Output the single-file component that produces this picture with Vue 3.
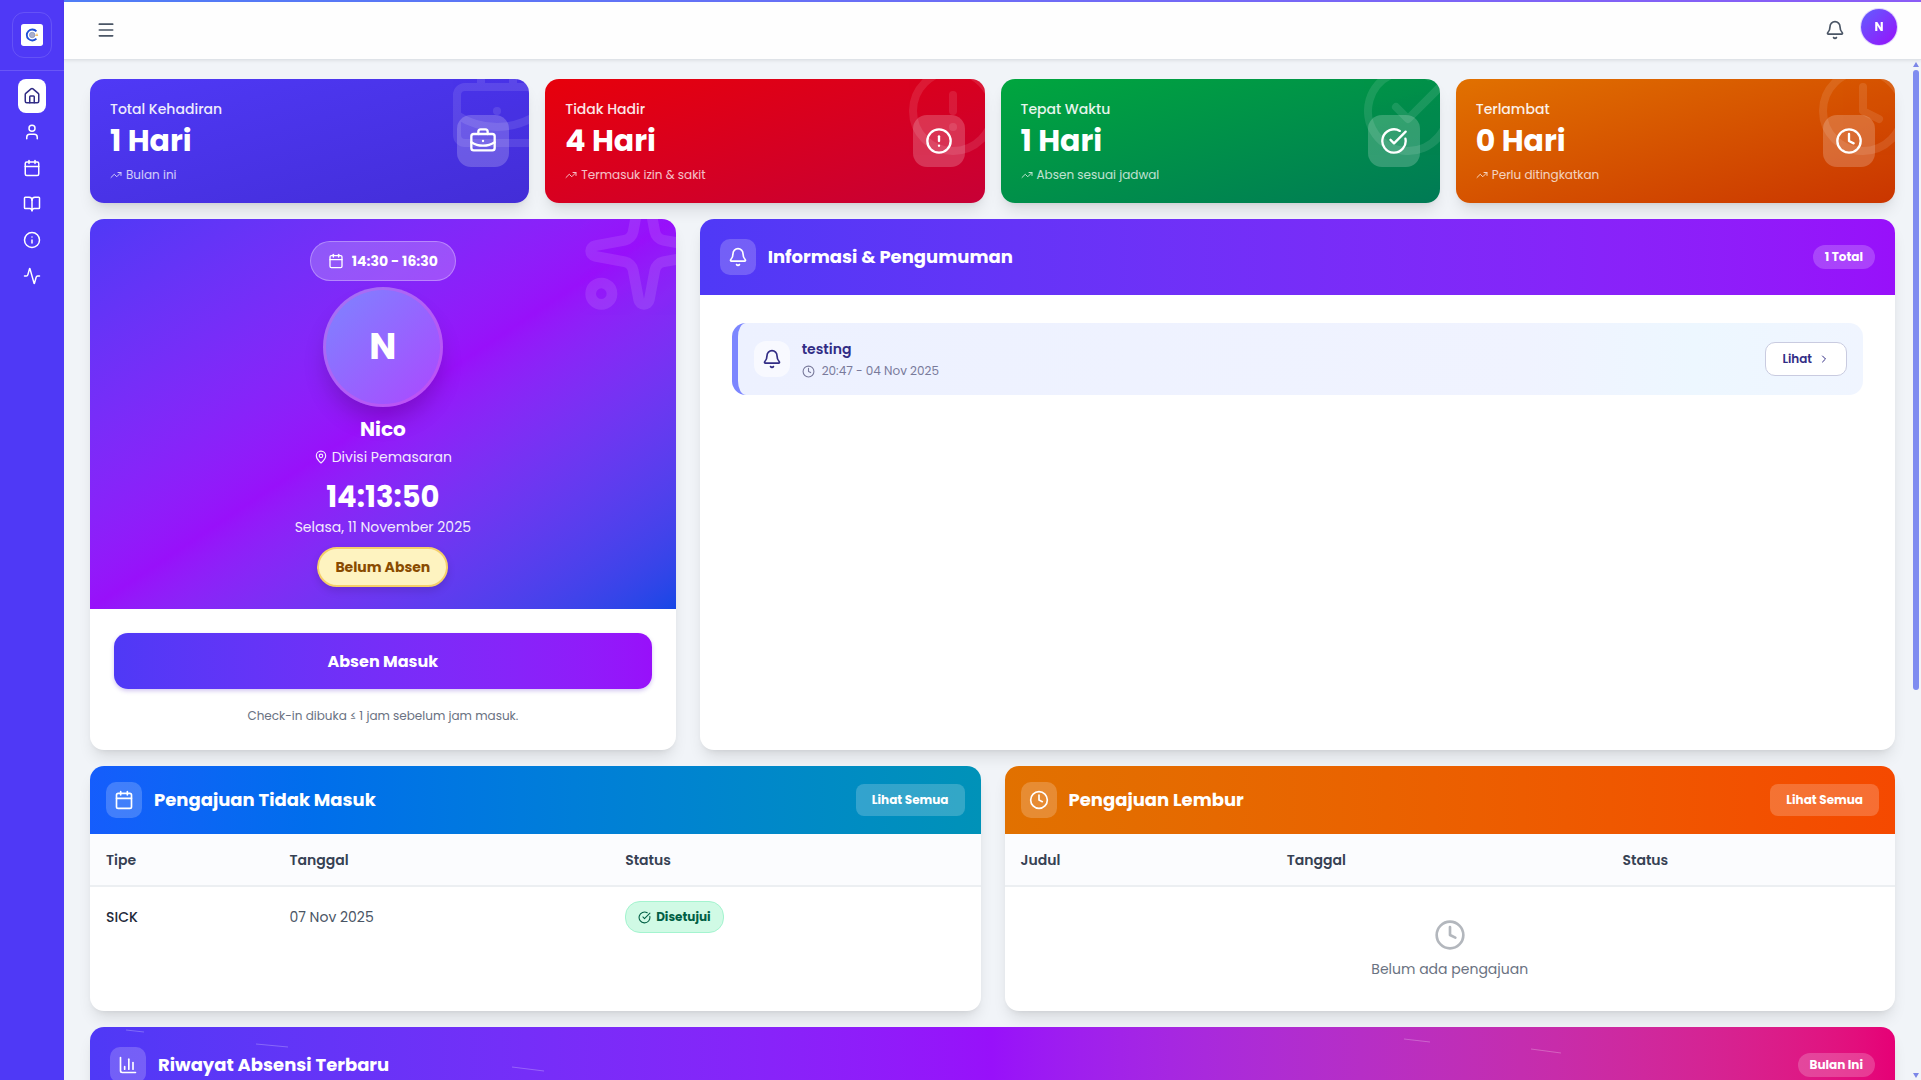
<template>
  <div class="layout">
    <aside class="sidebar">
      <div class="brand">
        <a href="#" class="brand-box" aria-label="Beranda">
          <svg class="brand-logo" viewBox="0 0 24 24">
            <rect width="24" height="24" rx="3" fill="#fff" />
            <path d="M16.8 8A6 6 0 1 0 16.8 16" fill="none" stroke="#1d4fd7" stroke-width="2" />
            <circle cx="12.2" cy="12" r="3" fill="#a9aecb" stroke="#8590bd" stroke-width="0.8" />
            <path d="M15.6 12.4h3M17.4 10.4v1.8" stroke="#f2c268" stroke-width="1.2" />
          </svg>
        </a>
      </div>
      <nav class="nav">
        <a
          v-for="item in menu"
          :key="item.icon"
          href="#"
          class="nav-item"
          :class="{ active: item.active }"
          :aria-label="item.label"
        >
          <Icon :name="item.icon" :size="18" />
        </a>
      </nav>
    </aside>

    <div class="main">
      <header class="topbar">
        <button class="icon-btn" aria-label="Menu"><Icon name="menu" :size="20" /></button>
        <div class="topbar-right">
          <button class="icon-btn" aria-label="Notifikasi"><Icon name="bell" :size="20" /></button>
          <button class="avatar-btn">N</button>
        </div>
      </header>

      <div class="body">
        <main class="content">
          <section class="stats">
            <div v-for="stat in stats" :key="stat.label" class="stat" :class="stat.color">
              <Icon :name="stat.icon" :size="96" class="stat-mark" />
              <div>
                <div class="stat-label">{{ stat.label }}</div>
                <div class="stat-value">{{ stat.value }}</div>
                <div class="stat-note"><Icon name="trending" :size="12" />{{ stat.note }}</div>
              </div>
              <div class="stat-icon"><Icon :name="stat.icon" :size="28" /></div>
            </div>
          </section>

          <section class="overview">
            <div class="card profile">
              <div class="profile-top">
                <Icon name="sparkles" :size="128" class="profile-mark" />
                <div class="shift"><Icon name="calendar" :size="16" />14:30 - 16:30</div>
                <div class="avatar">N</div>
                <h2 class="name">Nico</h2>
                <div class="division"><Icon name="pin" :size="14" />Divisi Pemasaran</div>
                <div class="clock">14:13:50</div>
                <div class="date">Selasa, 11 November 2025</div>
                <div class="absen-status">Belum Absen</div>
              </div>
              <div class="profile-bottom">
                <button class="absen-btn">Absen Masuk</button>
                <p class="hint">Check-in dibuka ≤ 1 jam sebelum jam masuk.</p>
              </div>
            </div>

            <div class="card">
              <div class="card-head tall indigo-head">
                <span class="head-icon"><Icon name="bell" :size="20" /></span>
                <h3>Informasi &amp; Pengumuman</h3>
                <span class="count">1 Total</span>
              </div>
              <div class="news-list">
                <div class="news">
                  <span class="news-icon"><Icon name="bell" :size="20" /></span>
                  <div class="news-text">
                    <div class="news-title">testing</div>
                    <div class="news-time"><Icon name="clock" :size="13" />20:47 - 04 Nov 2025</div>
                  </div>
                  <button class="news-btn">Lihat<Icon name="chevron" :size="12" /></button>
                </div>
              </div>
            </div>
          </section>

          <section class="requests">
            <div class="card">
              <div class="card-head blue-head">
                <span class="head-icon"><Icon name="calendar" :size="20" /></span>
                <h3>Pengajuan Tidak Masuk</h3>
                <button class="see-all">Lihat Semua</button>
              </div>
              <table class="leave">
                <thead>
                  <tr>
                    <th>Tipe</th>
                    <th>Tanggal</th>
                    <th>Status</th>
                  </tr>
                </thead>
                <tbody>
                  <tr v-for="row in leaves" :key="row.date">
                    <td class="type">{{ row.type }}</td>
                    <td>{{ row.date }}</td>
                    <td>
                      <span class="approved"><Icon name="check" :size="13" />{{ row.status }}</span>
                    </td>
                  </tr>
                </tbody>
              </table>
            </div>

            <div class="card">
              <div class="card-head orange-head">
                <span class="head-icon"><Icon name="clock" :size="20" /></span>
                <h3>Pengajuan Lembur</h3>
                <button class="see-all">Lihat Semua</button>
              </div>
              <table class="overtime">
                <thead>
                  <tr>
                    <th>Judul</th>
                    <th>Tanggal</th>
                    <th>Status</th>
                  </tr>
                </thead>
                <tbody>
                  <tr>
                    <td colspan="3" class="empty">
                      <Icon name="clock" :size="32" />
                      <div>Belum ada pengajuan</div>
                    </td>
                  </tr>
                </tbody>
              </table>
            </div>
          </section>

          <section class="card history">
            <div class="card-head tall pink-head">
              <svg class="streaks" viewBox="0 0 1805 76" preserveAspectRatio="none">
                <path d="M36 3l18 2M166 17l32 3M422 40l32 4M1314 12l26 3M1441 22l30 4" />
              </svg>
              <span class="head-icon"><Icon name="chart" :size="20" /></span>
              <h3>Riwayat Absensi Terbaru</h3>
              <span class="count">Bulan Ini</span>
            </div>
            <div class="history-body"></div>
          </section>
        </main>

        <div class="scrollbar">
          <span class="arrow up"></span>
          <span class="thumb"></span>
          <span class="arrow down"></span>
        </div>
      </div>
    </div>
  </div>
</template>

<script setup>
import { h } from 'vue'

const icons = {
  menu: ['M4 5h16', 'M4 12h16', 'M4 19h16'],
  home: [
    'M15 21v-8a1 1 0 0 0-1-1h-4a1 1 0 0 0-1 1v8',
    'M3 10a2 2 0 0 1 .709-1.528l7-5.999a2 2 0 0 1 2.582 0l7 5.999A2 2 0 0 1 21 10v9a2 2 0 0 1-2 2H5a2 2 0 0 1-2-2z',
  ],
  user: ['M19 21v-2a4 4 0 0 0-4-4H9a4 4 0 0 0-4 4v2', 'M16 7a4 4 0 1 1-8 0a4 4 0 1 1 8 0'],
  calendar: [
    'M8 2v4',
    'M16 2v4',
    'M5 4h14a2 2 0 0 1 2 2v14a2 2 0 0 1-2 2H5a2 2 0 0 1-2-2V6a2 2 0 0 1 2-2z',
    'M3 10h18',
  ],
  book: [
    'M12 7v14',
    'M3 18a1 1 0 0 1-1-1V4a1 1 0 0 1 1-1h5a4 4 0 0 1 4 4 4 4 0 0 1 4-4h5a1 1 0 0 1 1 1v13a1 1 0 0 1-1 1h-6a3 3 0 0 0-3 3 3 3 0 0 0-3-3z',
  ],
  info: ['M22 12a10 10 0 1 1-20 0a10 10 0 1 1 20 0', 'M12 16v-4', 'M12 8h.01'],
  activity: [
    'M22 12h-2.48a2 2 0 0 0-1.93 1.46l-2.35 8.36a.25.25 0 0 1-.48 0L9.24 2.18a.25.25 0 0 0-.48 0l-2.35 8.36A2 2 0 0 1 4.49 12H2',
  ],
  bell: [
    'M10.268 21a2 2 0 0 0 3.464 0',
    'M3.262 15.326A1 1 0 0 0 4 17h16a1 1 0 0 0 .74-1.673C19.41 13.956 18 12.499 18 8A6 6 0 0 0 6 8c0 4.499-1.411 5.956-2.738 7.326',
  ],
  briefcase: [
    'M12 12h.01',
    'M16 6V4a2 2 0 0 0-2-2h-4a2 2 0 0 0-2 2v2',
    'M22 13a18.15 18.15 0 0 1-20 0',
    'M4 6h16a2 2 0 0 1 2 2v10a2 2 0 0 1-2 2H4a2 2 0 0 1-2-2V8a2 2 0 0 1 2-2z',
  ],
  alert: ['M22 12a10 10 0 1 1-20 0a10 10 0 1 1 20 0', 'M12 8v4', 'M12 16h.01'],
  check: ['M21.801 10A10 10 0 1 1 17 3.335', 'm9 11 3 3L22 4'],
  clock: ['M22 12a10 10 0 1 1-20 0a10 10 0 1 1 20 0', 'M12 6v6l4 2'],
  trending: ['M16 7h6v6', 'm22 7-8.5 8.5-5-5L2 17'],
  pin: [
    'M20 10c0 4.993-5.539 10.193-7.399 11.799a1 1 0 0 1-1.202 0C9.539 20.193 4 14.993 4 10a8 8 0 0 1 16 0',
    'M15 10a3 3 0 1 1-6 0a3 3 0 1 1 6 0',
  ],
  sparkles: [
    'M11.017 2.814a1 1 0 0 1 1.966 0l1.051 5.558a2 2 0 0 0 1.594 1.594l5.558 1.051a1 1 0 0 1 0 1.966l-5.558 1.051a2 2 0 0 0-1.594 1.594l-1.051 5.558a1 1 0 0 1-1.966 0l-1.051-5.558a2 2 0 0 0-1.594-1.594l-5.558-1.051a1 1 0 0 1 0-1.966l5.558-1.051a2 2 0 0 0 1.594-1.594z',
    'M20 2v4',
    'M22 4h-4',
    'M6 20a2 2 0 1 1-4 0a2 2 0 1 1 4 0',
  ],
  chevron: ['m9 18 6-6-6-6'],
  chart: ['M3 3v16a2 2 0 0 0 2 2h16', 'M18 17V9', 'M13 17V5', 'M8 17v-3'],
}

const Icon = (props) =>
  h(
    'svg',
    {
      width: props.size,
      height: props.size,
      viewBox: '0 0 24 24',
      fill: 'none',
      stroke: 'currentColor',
      'stroke-width': 2,
      'stroke-linecap': 'round',
      'stroke-linejoin': 'round',
      'aria-hidden': 'true',
    },
    icons[props.name].map((d) => h('path', { d }))
  )
Icon.props = ['name', 'size']

const menu = [
  { icon: 'home', label: 'Dashboard', active: true },
  { icon: 'user', label: 'Profil' },
  { icon: 'calendar', label: 'Kalender' },
  { icon: 'book', label: 'Panduan' },
  { icon: 'info', label: 'Informasi' },
  { icon: 'activity', label: 'Aktivitas' },
]

const stats = [
  { label: 'Total Kehadiran', value: '1 Hari', note: 'Bulan ini', icon: 'briefcase', color: 'indigo' },
  { label: 'Tidak Hadir', value: '4 Hari', note: 'Termasuk izin & sakit', icon: 'alert', color: 'red' },
  { label: 'Tepat Waktu', value: '1 Hari', note: 'Absen sesuai jadwal', icon: 'check', color: 'green' },
  { label: 'Terlambat', value: '0 Hari', note: 'Perlu ditingkatkan', icon: 'clock', color: 'orange' },
]

const leaves = [{ type: 'SICK', date: '07 Nov 2025', status: 'Disetujui' }]
</script>

<style>
body {
  margin: 0;
  background: #f1f5f9;
}
</style>

<style scoped>
* {
  box-sizing: border-box;
}

.layout {
  display: flex;
  height: 100vh;
  overflow: hidden;
  font-family: Poppins, Inter, "Liberation Sans", sans-serif;
  font-size: 14px;
  line-height: 20px;
  color: #364153;
}

svg {
  display: block;
  flex-shrink: 0;
}

button {
  font-family: inherit;
  border: none;
  padding: 0;
  cursor: pointer;
}

a {
  text-decoration: none;
}

h2,
h3,
p {
  margin: 0;
}

/* sidebar */
.sidebar {
  width: 64px;
  flex-shrink: 0;
  background: #4f39f6;
}

.brand {
  height: 71px;
  padding-top: 12px;
  display: flex;
  justify-content: center;
  align-items: flex-start;
  border-bottom: 1px solid rgba(255, 255, 255, 0.15);
}

.brand-box {
  width: 40px;
  height: 46px;
  border: 1px solid rgba(255, 255, 255, 0.13);
  border-radius: 12px;
  display: flex;
  align-items: center;
  justify-content: center;
}

.brand-logo {
  width: 22px;
  height: 22px;
}

.nav {
  display: flex;
  flex-direction: column;
  align-items: center;
  gap: 2px;
  padding-top: 8px;
}

.nav-item {
  width: 28px;
  height: 34px;
  border-radius: 8px;
  display: flex;
  align-items: center;
  justify-content: center;
  color: #fff;
}

.nav-item.active {
  background: #fff;
  color: #312c85;
}

/* top bar */
.main {
  flex: 1;
  min-width: 0;
  display: flex;
  flex-direction: column;
}

.topbar {
  height: 60px;
  flex-shrink: 0;
  padding: 0 24px 6px 32px;
  display: flex;
  align-items: center;
  justify-content: space-between;
  background: linear-gradient(to right, #4f7df6, #8b5cf6) top / 100% 2px no-repeat, #fefefe;
  border-bottom: 1px solid #dfe3e8;
  box-shadow: 0 1px 3px rgba(0, 0, 0, 0.08);
  z-index: 1;
}

.topbar-right {
  display: flex;
  align-items: center;
  gap: 16px;
}

.icon-btn {
  padding-top: 6px;
  background: none;
  color: #4a5565;
}

.avatar-btn {
  width: 36px;
  height: 36px;
  border-radius: 50%;
  background: linear-gradient(to bottom right, #615fff, #9810fa);
  box-shadow: 0 0 0 1px #e0d5fd;
  color: #fff;
  font-size: 12px;
  font-weight: 700;
}

.body {
  flex: 1;
  min-height: 0;
  display: flex;
}

.content {
  flex: 1;
  min-width: 0;
  padding: 19px 18px 24px 26px;
  overflow-y: auto;
  scrollbar-width: none;
  display: flex;
  flex-direction: column;
  gap: 16px;
  background: #f1f4f8;
}

.content > * {
  flex-shrink: 0;
}

.scrollbar {
  width: 8px;
  display: flex;
  flex-direction: column;
  align-items: center;
  gap: 3px;
  padding: 2px 2px 2px 0;
  background: #f1f4f8;
}

.arrow {
  border: 3px solid transparent;
}

.arrow.up {
  border-top: none;
  border-bottom: 5px solid #7c86e8;
}

.arrow.down {
  border-bottom: none;
  border-top: 5px solid #7c86e8;
  margin-top: auto;
}

.thumb {
  width: 6px;
  height: 61%;
  border-radius: 3px;
  background: #7f8cf0;
}

/* stat cards */
.stats {
  display: grid;
  grid-template-columns: repeat(4, 1fr);
  gap: 16px;
}

.stat {
  position: relative;
  overflow: hidden;
  padding: 20px;
  border-radius: 14px;
  display: flex;
  align-items: center;
  justify-content: space-between;
  color: #fff;
}

.stat,
.card {
  box-shadow: 0 10px 15px -3px rgba(0, 0, 0, 0.1), 0 4px 6px -4px rgba(0, 0, 0, 0.1);
}

.indigo {
  background: linear-gradient(to bottom right, #4f39f6, #432dd7);
}

.red {
  background: linear-gradient(to bottom right, #e7000b, #c70036);
}

.green {
  background: linear-gradient(to bottom right, #00a63e, #007a55);
}

.orange {
  background: linear-gradient(to bottom right, #e17100, #ca3500);
}

.stat-mark {
  position: absolute;
  top: -16px;
  right: -16px;
  opacity: 0.1;
}

.stat-label {
  font-weight: 500;
  opacity: 0.9;
}

.stat-value {
  margin: 4px 0 8px;
  font-size: 30px;
  line-height: 36px;
  font-weight: 700;
}

.stat-note {
  display: flex;
  align-items: center;
  gap: 4px;
  font-size: 12px;
  line-height: 16px;
  opacity: 0.75;
}

.stat-icon {
  padding: 12px;
  border-radius: 14px;
  background: rgba(255, 255, 255, 0.2);
}

/* cards */
.card {
  display: flex;
  flex-direction: column;
  overflow: hidden;
  border-radius: 14px;
  background: #fff;
}

.card-head {
  position: relative;
  display: flex;
  align-items: center;
  gap: 12px;
  padding: 16px;
  color: #fff;
}

.card-head.tall {
  padding: 20px;
}

.card-head h3 {
  flex: 1;
  font-size: 18px;
  line-height: 28px;
  font-weight: 700;
}

.indigo-head {
  background: linear-gradient(to right in oklab, #4f39f6, #9810fa);
}

.blue-head {
  background: linear-gradient(to right in oklab, #155dfc, #0092b8);
}

.orange-head {
  background: linear-gradient(to right in oklab, #e17100, #f54900);
}

.pink-head {
  background: linear-gradient(to right in oklab, #4f39f6, #9810fa, #e60076);
}

.head-icon {
  padding: 8px;
  border-radius: 10px;
  background: rgba(255, 255, 255, 0.2);
}

.count {
  padding: 4px 12px;
  border-radius: 12px;
  background: rgba(255, 255, 255, 0.2);
  font-size: 12px;
  line-height: 16px;
  font-weight: 700;
}

.see-all {
  padding: 8px 16px;
  border-radius: 8px;
  background: rgba(255, 255, 255, 0.2);
  color: #fff;
  font-size: 12px;
  line-height: 16px;
  font-weight: 700;
}

.overview {
  display: grid;
  grid-template-columns: repeat(3, 1fr);
  gap: 24px;
}

.overview .card:last-child {
  grid-column: span 2;
}

/* profile */
.profile-top {
  position: relative;
  overflow: hidden;
  padding: 22px;
  display: flex;
  flex-direction: column;
  align-items: center;
  background: linear-gradient(to bottom right in oklab, #4f39f6, #9810fa, #1447e6);
  color: #fff;
}

.profile-mark {
  position: absolute;
  top: -32px;
  right: -32px;
  opacity: 0.1;
}

.shift {
  display: flex;
  align-items: center;
  gap: 8px;
  padding: 9px 17px;
  border: 1px solid rgba(255, 255, 255, 0.3);
  border-radius: 20px;
  background: rgba(255, 255, 255, 0.2);
  font-weight: 700;
}

.avatar {
  width: 120px;
  height: 120px;
  margin: 6px 0 8px;
  border: 3px solid rgba(220, 90, 230, 0.4);
  border-radius: 50%;
  background: linear-gradient(to bottom right, #7c86ff, #ad46ff) border-box;
  box-shadow: 0 16px 24px -4px rgba(0, 0, 0, 0.2);
  display: flex;
  align-items: center;
  justify-content: center;
  font-size: 36px;
  font-weight: 700;
}

.name {
  font-size: 20px;
  line-height: 28px;
  font-weight: 700;
}

.division {
  display: flex;
  align-items: center;
  gap: 4px;
  margin: 4px 0 12px;
  opacity: 0.9;
}

.clock {
  font-size: 29px;
  line-height: 36px;
  font-weight: 700;
}

.date {
  margin: 2px 0 10px;
  opacity: 0.9;
}

.absen-status {
  padding: 8px 16px;
  border: 2px solid #f5cf6a;
  border-radius: 20px;
  background: #fef3c0;
  box-shadow: 0 4px 8px rgba(0, 0, 0, 0.12);
  color: #894b00;
  font-weight: 700;
}

.profile-bottom {
  padding: 24px;
  text-align: center;
}

.absen-btn {
  width: 100%;
  height: 56px;
  border-radius: 14px;
  background: linear-gradient(to right in oklab, #4f39f6, #9810fa);
  box-shadow: 0 2px 4px rgba(80, 30, 200, 0.25);
  color: #fff;
  font-size: 16px;
  font-weight: 700;
}

.hint {
  margin-top: 17px;
  font-size: 12px;
  color: #6a7282;
}

/* announcements */
.news-list {
  padding: 28px 32px;
}

.news {
  display: flex;
  align-items: center;
  padding: 16px;
  border-left: 6px solid #7c86ff;
  border-radius: 14px;
  background: linear-gradient(to right, #edf1ff, #f0f3ff 70%, #edf7ff 85%, #f0f5ff);
}

.news-icon {
  padding: 8px;
  border-radius: 12px;
  background: rgba(255, 255, 255, 0.6);
  color: #312c85;
}

.news-text {
  flex: 1;
  padding-left: 12px;
}

.news-title {
  font-weight: 600;
  color: #312c85;
}

.news-time {
  display: flex;
  align-items: center;
  gap: 7px;
  margin-top: 4px;
  font-size: 12px;
  line-height: 16px;
  color: #797a9b;
}

.news-btn {
  display: flex;
  align-items: center;
  gap: 6px;
  padding: 8px 16px;
  border: 1px solid #c9cbe0;
  border-radius: 10px;
  background: #fff;
  color: #312c85;
  font-size: 12px;
  line-height: 16px;
  font-weight: 600;
}

/* requests */
.requests {
  display: grid;
  grid-template-columns: 1fr 1fr;
  gap: 24px;
}

table {
  width: 100%;
  table-layout: fixed;
  border-collapse: collapse;
}

th {
  height: 52px;
  padding: 0 16px;
  border-bottom: 2px solid #eceff2;
  background: #fbfcfe;
  text-align: left;
  font-weight: 600;
}

.leave th:first-child {
  width: 20.6%;
}

.overtime th:first-child {
  width: 29.9%;
}

th:nth-child(2) {
  width: 37.7%;
}

td {
  padding: 14px 16px;
  color: #4a5565;
}

.type {
  font-weight: 500;
  color: #1e2939;
}

.approved {
  display: inline-flex;
  align-items: center;
  gap: 5px;
  padding: 6px 12px;
  border: 1px solid #a4f4cf;
  border-radius: 15px;
  background: #d0fae5;
  color: #006045;
  font-size: 12px;
  line-height: 18px;
  font-weight: 700;
}

.empty {
  padding: 32px 16px;
  text-align: center;
  color: #6a7282;
}

.empty svg {
  margin: 0 auto 8px;
  color: #b3b7bd;
}

/* history */
.streaks {
  position: absolute;
  inset: 0;
  width: 100%;
  height: 100%;
  fill: none;
  stroke: rgba(255, 255, 255, 0.25);
}

.history-body {
  min-height: 480px;
}
</style>
